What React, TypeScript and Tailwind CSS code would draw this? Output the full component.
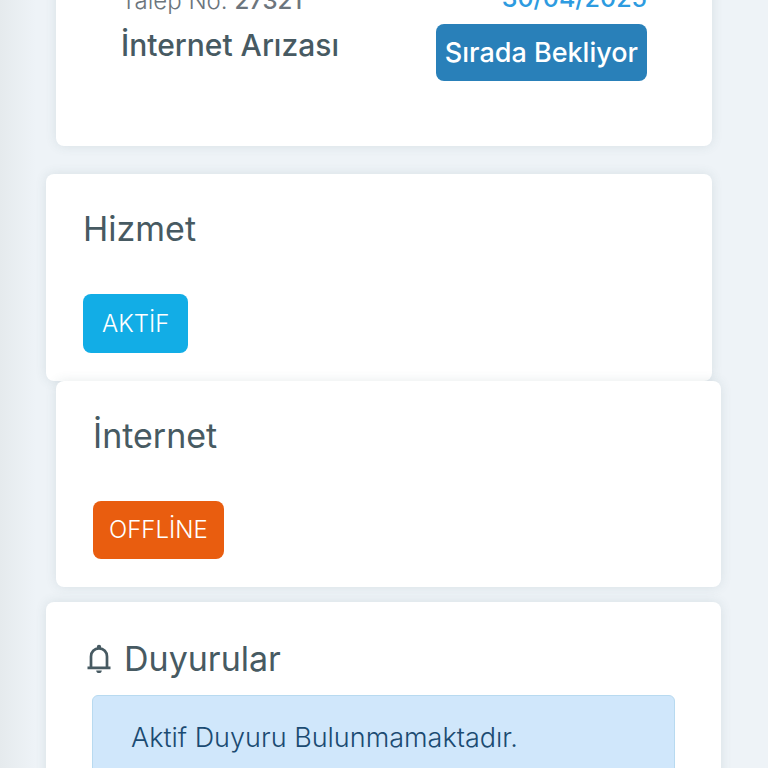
import { ReactNode } from 'react'
import clsx from 'clsx'

interface CardProps {
  children: ReactNode
  className?: string
}

function Card({ children, className = '' }: CardProps) {
  return (
    <section className={clsx('bg-white rounded-lg shadow-[0_0_12px_rgba(60,90,100,0.12)]', className)}>
      {children}
    </section>
  )
}

interface StatusCardProps {
  title: string
  status: string
  className?: string
  badgeClassName: string
}

function StatusCard({ title, status, className, badgeClassName }: StatusCardProps) {
  return (
    <Card className={clsx('px-[37px] pt-[30px] pb-7', className)}>
      <h2 className="text-[34px] leading-[50px] text-[#475a62]">{title}</h2>
      <button
        type="button"
        className={clsx('mt-10 rounded-lg text-[24px] font-light text-white', badgeClassName)}
      >
        {status}
      </button>
    </Card>
  )
}

function BellIcon() {
  return (
    <svg viewBox="0 0 26 30" className="h-[30px] w-[26px]" fill="none" stroke="currentColor" strokeWidth="2.7" aria-hidden="true">
      <path d="M1.5 23.8h23M5 23.8V12.4c0-4.6 3.3-8 8-8s8 3.4 8 8v11.4" />
      <circle cx="13" cy="3" r="2.2" fill="currentColor" stroke="none" />
      <path d="M10.2 26.5h5.6c0 1.7-1.2 2.6-2.8 2.6s-2.8-.9-2.8-2.6z" fill="currentColor" stroke="none" />
    </svg>
  )
}

export default function App() {
  return (
    <div
      lang="tr"
      className="h-screen overflow-hidden bg-[#eef3f7] bg-[linear-gradient(to_right,#e5eaed_0px,#eef3f7_36px)] font-['Inter','Liberation_Sans',sans-serif]"
    >
      {/* Üst kısmı ekran dışında kalan kaydırılmış liste */}
      <main className="-mt-16 pl-[46px] pr-[47px]">
        <Card className="ml-[10px] mr-[9px] flex justify-between px-[65px] pt-[42px] pb-[65px]">
          <div>
            <p className="text-[24px] leading-[46px] font-light text-[#6c757d]">
              Talep No: <strong className="font-medium">27321</strong>
            </p>
            <h3 className="text-[30px] leading-[42px] font-medium text-[#475a62]">İnternet Arızası</h3>
          </div>
          <div className="flex flex-col items-end">
            <time dateTime="2025-04-30" className="text-[25px] leading-[40px] font-medium text-[#2d9be0]">
              30/04/2025
            </time>
            <span className="mt-[6px] rounded-lg bg-[#2980b9] px-[9px] text-[27px] leading-[57px] font-medium text-white">
              Sırada Bekliyor
            </span>
          </div>
        </Card>

        <StatusCard
          title="Hizmet"
          status="AKTİF"
          className="mt-7 mr-[9px]"
          badgeClassName="px-[19px] leading-[59px] bg-[#12ade6]"
        />
        <StatusCard
          title="İnternet"
          status="OFFLİNE"
          className="ml-[10px]"
          badgeClassName="px-4 leading-[58px] bg-[#e95d0f]"
        />

        <Card className="mt-[15px] px-[40px] pt-8 pb-10">
          <h2 className="flex items-center gap-3 text-[34px] leading-[50px] text-[#475a62]">
            <BellIcon />
            Duyurular
          </h2>
          <div
            role="alert"
            className="mt-[11px] mx-[6px] rounded-md border border-[#b8daf0] bg-[#d0e7fb] px-[38px] py-[22px] text-[27px] leading-[40px] font-light text-[#1b4b72]"
          >
            Aktif Duyuru Bulunmamaktadır.
          </div>
        </Card>
      </main>
    </div>
  )
}
